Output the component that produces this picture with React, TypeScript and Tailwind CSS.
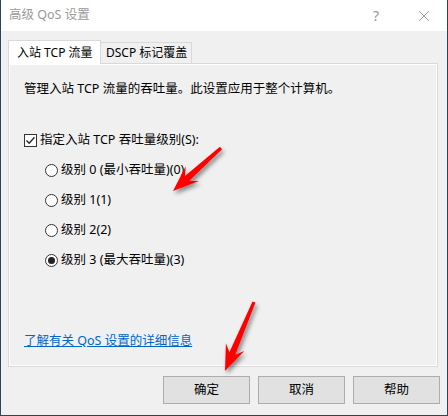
import React from "react";

const FONT = '"Noto Sans", "Noto Sans CJK SC", "Noto Sans CJK JP", sans-serif';

function arrowPoints(tx: number, ty: number, px: number, py: number) {
  const dx = px - tx;
  const dy = py - ty;
  const len = Math.hypot(dx, dy);
  const ux = dx / len;
  const uy = dy / len;
  const nx = -uy;
  const ny = ux;
  const headLen = 24;
  const hw = 10;
  const w1 = 1.6;
  const w2 = 3.2;
  const bx = px - ux * headLen;
  const by = py - uy * headLen;
  const sx = bx + ux * 5;
  const sy = by + uy * 5;
  const pts: [number, number][] = [
    [tx + nx * w1, ty + ny * w1],
    [sx + nx * w2, sy + ny * w2],
    [bx + nx * hw - ux * 2, by + ny * hw - uy * 2],
    [px, py],
    [bx - nx * hw - ux * 2, by - ny * hw - uy * 2],
    [sx - nx * w2, sy - ny * w2],
    [tx - nx * w1, ty - ny * w1],
  ];
  return pts.map((p) => p.map((v) => v.toFixed(1)).join(",")).join(" ");
}

function Checkbox({ checked }: { checked: boolean }) {
  return (
    <span className="w-[13px] h-[13px] border border-[#333333] bg-white flex items-center justify-center shrink-0">
      {checked && (
        <svg width="11" height="11" viewBox="0 0 11 11">
          <path d="M1.5 5.5 L4.2 8.2 L9.5 2.2" fill="none" stroke="#222" strokeWidth="1.3" />
        </svg>
      )}
    </span>
  );
}

function Radio({ checked }: { checked: boolean }) {
  return (
    <span className="w-[13px] h-[13px] rounded-full border border-[#333333] bg-white flex items-center justify-center shrink-0">
      {checked && <span className="w-[7px] h-[7px] rounded-full bg-[#222222]" />}
    </span>
  );
}

function RadioRow({ label, checked }: { label: string; checked?: boolean }) {
  return (
    <div className="flex items-center h-[16px] ml-[21px]">
      <Radio checked={!!checked} />
      <span className="ml-[3px] text-[12.5px] leading-[16px] text-black">{label}</span>
    </div>
  );
}

function Button({ label }: { label: string }) {
  return (
    <div className="w-[87px] h-[28px] bg-[#e1e1e1] border border-[#adadad] flex items-center justify-center text-[12.5px] text-black">
      {label}
    </div>
  );
}

export default function App() {
  return (
    <div
      className="relative w-[448px] h-[416px] flex flex-col border-l border-r border-b border-[#2b4260] overflow-hidden"
      style={{ fontFamily: FONT }}
    >
      {/* Title bar */}
      <div className="h-[31px] bg-white flex items-center shrink-0">
        <span className="ml-[8px] text-[12.5px] text-[#999999]">高级 QoS 设置</span>
        <div className="flex-1" />
        <span className="text-[14px] text-[#999999] mr-[39px]">?</span>
        <svg width="12" height="12" viewBox="0 0 12 12" className="mr-[17px]">
          <path d="M1 1 L11 11 M11 1 L1 11" stroke="#9a9a9a" strokeWidth="1" />
        </svg>
      </div>

      {/* Body */}
      <div className="flex-1 bg-[#f0f0f0] flex flex-col pl-[7px] pr-[7px]">
        {/* Tabs */}
        <div className="flex items-end h-[33px] pt-[9px] relative z-10">
          <div className="h-[24px] w-[93px] bg-white border border-b-0 border-[#d9d9d9] flex items-center pl-[8px] text-[12px] text-black whitespace-nowrap">
            入站 TCP 流量
          </div>
          <div className="h-[21px] w-[91px] mb-[1px] bg-[#f0f0f0] border border-l-0 border-b-0 border-[#d9d9d9] flex items-center pl-[5px] text-[12px] text-black whitespace-nowrap">
            DSCP 标记覆盖
          </div>
        </div>
        {/* Panel */}
        <div className="-mt-[1px] w-[430px] h-[304px] border border-[#d9d9d9] bg-[#f0f0f0]">
          <div className="w-full h-full border border-white flex flex-col pl-[14px] pt-[16px] text-[12.5px] text-black">
            <div className="h-[16px] leading-[16px] whitespace-nowrap">管理入站 TCP 流量的吞吐量。此设置应用于整个计算机。</div>
            <div className="flex items-center h-[16px] mt-[35px]">
              <Checkbox checked />
              <span className="ml-[3px] leading-[16px]">指定入站 TCP 吞吐量级别(S):</span>
            </div>
            <div className="flex flex-col gap-[14px] mt-[14px]">
              <RadioRow label="级别 0 (最小吞吐量)(0)" />
              <RadioRow label="级别 1(1)" />
              <RadioRow label="级别 2(2)" />
              <RadioRow label="级别 3 (最大吞吐量)(3)" checked />
            </div>
            <div className="mt-[65px] h-[16px] leading-[16px]">
              <span className="text-[#0066cc] underline">了解有关 QoS 设置的详细信息</span>
            </div>
          </div>
        </div>
        {/* Buttons */}
        <div className="flex justify-end gap-[8px] mt-[9px]">
          <Button label="确定" />
          <Button label="取消" />
          <Button label="帮助" />
        </div>
      </div>

      {/* Annotation arrows */}
      <svg className="absolute left-0 top-0 pointer-events-none" width="448" height="416">
        <defs>
          <filter id="sh" x="-20%" y="-20%" width="140%" height="140%">
            <feDropShadow dx="2" dy="3" stdDeviation="2" floodColor="#000" floodOpacity="0.45" />
          </filter>
        </defs>
        <polygon points={arrowPoints(220, 148, 172, 191)} fill="#ff0000" filter="url(#sh)" />
        <polygon points={arrowPoints(253, 302, 224, 371)} fill="#ff0000" filter="url(#sh)" />
      </svg>
    </div>
  );
}
